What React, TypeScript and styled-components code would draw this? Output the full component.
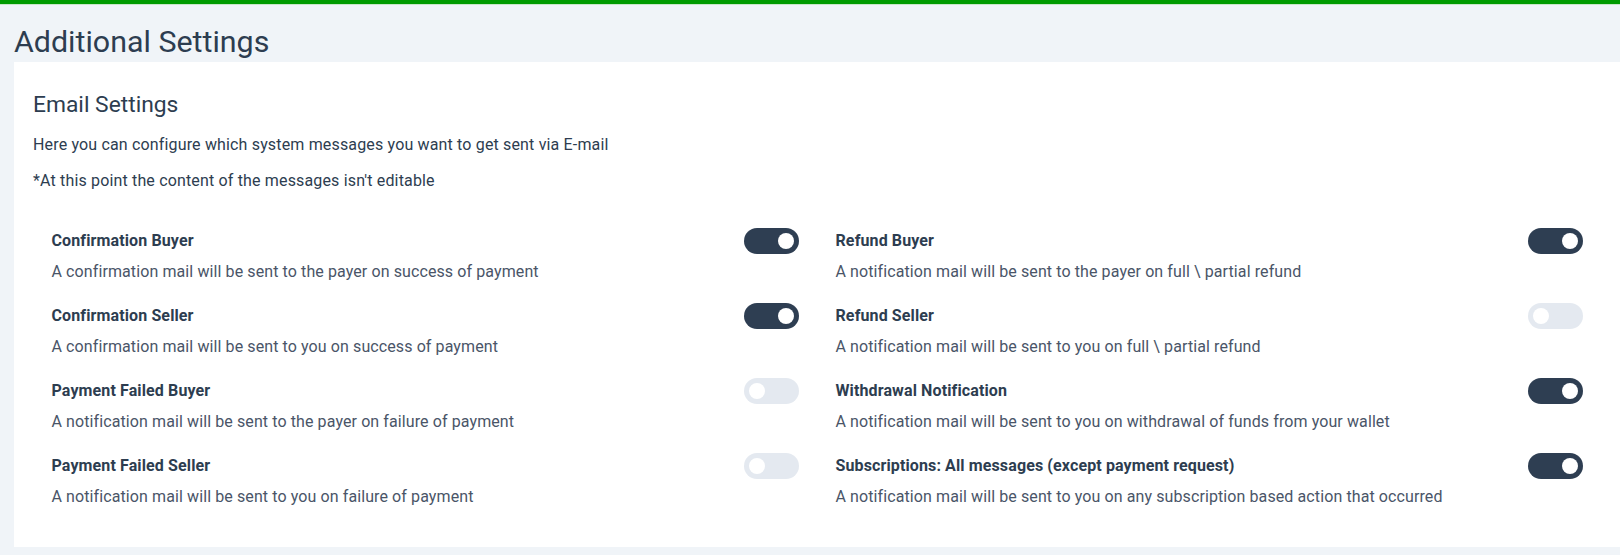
import React, { useState } from "react";
import styled, { createGlobalStyle } from "styled-components";

const GlobalStyle = createGlobalStyle`
  html, body {
    margin: 0;
    padding: 0;
    background: #f0f4f8;
    font-family: Roboto, "Liberation Sans", sans-serif;
    color: #2d3748;
  }
  * { box-sizing: border-box; }
`;

const TopBar = styled.div`
  height: 5px;
  background: #009b00;
  border-bottom: 1px solid #c9e6c9;
`;

const Page = styled.div`
  padding: 19px 0 9px 14px;
`;

const Title = styled.h1`
  margin: 0 0 2px 0;
  font-size: 30.4px;
  line-height: 36px;
  font-weight: 400;
  color: #2d3d50;
`;

const Card = styled.section`
  background: #ffffff;
  padding: 29px 19px 39px 19px;
`;

const CardTitle = styled.h2`
  margin: 0 0 15px 0;
  font-size: 22.8px;
  line-height: 28px;
  font-weight: 400;
  color: #2d3d50;
`;

const Intro = styled.p`
  margin: 0 0 14px 0;
  font-size: 16px;
  line-height: 22px;
  letter-spacing: 0.16px;
  color: #2d3d50;
`;

const Grid = styled.div`
  display: grid;
  grid-template-columns: 1fr 1fr;
  row-gap: 20px;
  margin-top: 36px;
`;

const Item = styled.div`
  padding: 0 18px 0 18.5px;
  display: flex;
  flex-direction: column;
  gap: 7px;
`;

const ItemHeader = styled.div`
  display: flex;
  align-items: center;
  justify-content: space-between;
  height: 26px;
`;

const Label = styled.span`
  font-size: 16px;
  font-weight: 700;
  line-height: 20px;
  letter-spacing: 0.12px;
  color: #2d3d50;
`;

const Desc = styled.span`
  font-size: 16px;
  line-height: 22px;
  letter-spacing: 0.1px;
  color: #4a5568;
`;

const Switch = styled.button<{ $on: boolean }>`
  width: 55px;
  height: 26px;
  border: none;
  border-radius: 13px;
  padding: 0 5px;
  margin: 0;
  display: flex;
  align-items: center;
  justify-content: ${(p) => (p.$on ? "flex-end" : "flex-start")};
  background: ${(p) => (p.$on ? "#2e3e52" : "#e4e9f0")};
  cursor: pointer;
  flex-shrink: 0;
`;

const Knob = styled.span`
  width: 16px;
  height: 16px;
  border-radius: 50%;
  background: #ffffff;
`;

type Setting = { label: string; desc: string; on: boolean };

const settings: Setting[] = [
  { label: "Confirmation Buyer", desc: "A confirmation mail will be sent to the payer on success of payment", on: true },
  { label: "Refund Buyer", desc: "A notification mail will be sent to the payer on full \\ partial refund", on: true },
  { label: "Confirmation Seller", desc: "A confirmation mail will be sent to you on success of payment", on: true },
  { label: "Refund Seller", desc: "A notification mail will be sent to you on full \\ partial refund", on: false },
  { label: "Payment Failed Buyer", desc: "A notification mail will be sent to the payer on failure of payment", on: false },
  { label: "Withdrawal Notification", desc: "A notification mail will be sent to you on withdrawal of funds from your wallet", on: true },
  { label: "Payment Failed Seller", desc: "A notification mail will be sent to you on failure of payment", on: false },
  { label: "Subscriptions: All messages (except payment request)", desc: "A notification mail will be sent to you on any subscription based action that occurred", on: true },
];

export default function App() {
  const [state, setState] = useState(settings.map((s) => s.on));
  return (
    <>
      <GlobalStyle />
      <TopBar />
      <Page>
        <Title>Additional Settings</Title>
        <Card>
          <CardTitle>Email Settings</CardTitle>
          <Intro>Here you can configure which system messages you want to get sent via E-mail</Intro>
          <Intro>*At this point the content of the messages isn't editable</Intro>
          <Grid>
            {settings.map((s, i) => (
              <Item key={s.label}>
                <ItemHeader>
                  <Label>{s.label}</Label>
                  <Switch
                    $on={state[i]}
                    aria-label={s.label}
                    onClick={() => setState((st) => st.map((v, j) => (j === i ? !v : v)))}
                  >
                    <Knob />
                  </Switch>
                </ItemHeader>
                <Desc>{s.desc}</Desc>
              </Item>
            ))}
          </Grid>
        </Card>
      </Page>
    </>
  );
}
